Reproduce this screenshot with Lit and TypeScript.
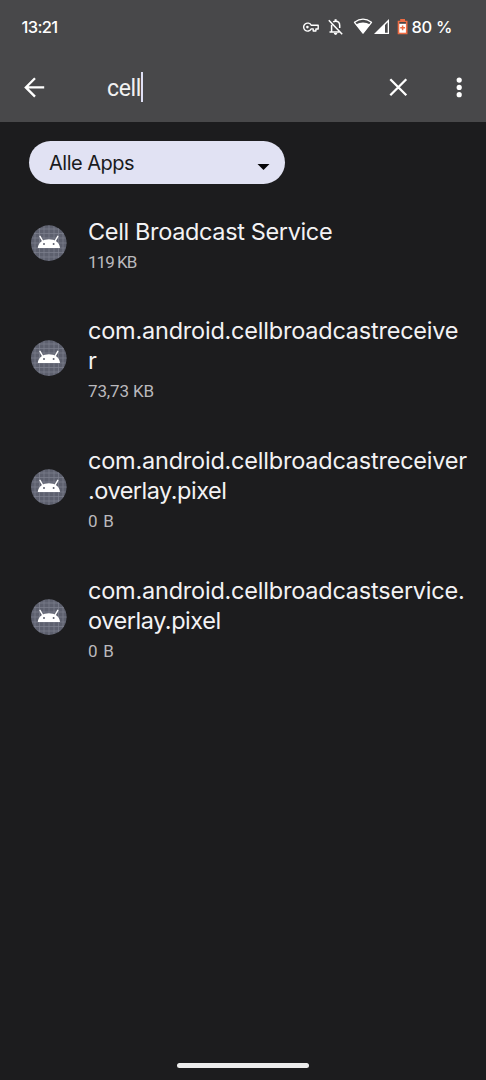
import { LitElement, html, css, svg } from "lit";
import { customElement, property } from "lit/decorators.js";

type Line = { text: string; tracking: number };

const grid = [4, 8.5, 13, 18, 23, 27.5, 32];

@customElement("app-row")
class AppRow extends LitElement {
  @property({ attribute: false }) lines: Line[] = [];
  @property({ attribute: false }) size: Line = { text: "", tracking: 0 };

  static styles = css`
    :host { display: flex; align-items: center; padding: 22.15px 0 22.15px 31px; }
    .icon { width: 36px; height: 36px; flex: none; margin-right: 21px; }
    .text { padding-top: 1.3px; margin-bottom: -1.3px; }
    .title { font: 400 23.5px/29.9px Inter, sans-serif; color: #f3f2f4; white-space: nowrap; }
    .size { font: 400 17px/21px Roboto, sans-serif; color: #bab9bd; padding-top: 5.2px; margin-bottom: -0.7px; white-space: nowrap; }
  `;

  render() {
    return html`
      <svg class="icon" viewBox="0 0 36 36">
        <defs><clipPath id="c"><circle cx="17.8" cy="18.1" r="17.8" /></clipPath></defs>
        <g clip-path="url(#c)">
          <rect width="36" height="36.5" fill="#5d606e" />
          ${grid.map((p) => svg`<path d="M${p} 0V36M0 ${p}H36" stroke="#7e818f" stroke-width=".7" />`)}
        </g>
        <path d="M11.6 15.8L9 11.3M24.2 15.8L26.8 11.3" fill="none" stroke="#fff" stroke-width="1.4" stroke-linecap="round" />
        <path d="M6.8 23C7.2 17.4 12 14.2 17.9 14.2S28.6 17.4 29 23Z" fill="#fff" />
        <circle cx="13" cy="19" r="1" fill="#5d606e" /><circle cx="22.6" cy="19" r="1" fill="#5d606e" />
      </svg>
      <div class="text">
        ${this.lines.map((l) => html`<div class="title" style="letter-spacing:${l.tracking}px">${l.text}</div>`)}
        <div class="size" style="letter-spacing:${this.size.tracking}px">${this.size.text}</div>
      </div>`;
  }
}

const apps: { lines: Line[]; size: Line }[] = [
  { lines: [{ text: "Cell Broadcast Service", tracking: -0.36 }], size: { text: "119 KB", tracking: -0.95 } },
  {
    lines: [{ text: "com.android.cellbroadcastreceive", tracking: -0.22 }, { text: "r", tracking: 0 }],
    size: { text: "73,73 KB", tracking: -0.15 },
  },
  {
    lines: [{ text: "com.android.cellbroadcastreceiver", tracking: -0.22 }, { text: ".overlay.pixel", tracking: -0.5 }],
    size: { text: "0 B", tracking: 0.8 },
  },
  {
    lines: [{ text: "com.android.cellbroadcastservice.", tracking: -0.22 }, { text: "overlay.pixel", tracking: -0.45 }],
    size: { text: "0 B", tracking: 0.8 },
  },
];

@customElement("app-root")
class AppRoot extends LitElement {
  static styles = css`
    :host { display: flex; flex-direction: column; height: 1080px; width: 486px; background: #1c1c1e; overflow: hidden; font-family: Inter, sans-serif; color: #fff; }
    .top { background: #48484a; height: 121.5px; flex: none; }
    .status { display: flex; align-items: center; height: 53px; padding: 0 34px 0 21.5px; font: 500 16.5px/20px Inter, sans-serif; }
    .time { flex: 1; letter-spacing: -0.65px; }
    .icons { display: block; width: 110px; height: 24px; }
    .pct { width: 41px; white-space: nowrap; letter-spacing: -0.3px; padding-left: 0.5px; box-sizing: border-box; }
    .search { display: flex; align-items: center; height: 68px; }
    .back { width: 24px; height: 24px; margin-left: 23px; }
    .query { margin-left: 60px; padding-top: 3px; font: 400 23px/30px Roboto, sans-serif; color: #f1f1f1; letter-spacing: -0.35px; }
    .caret { width: 2px; height: 30px; background: #dfe0f5; }
    .grow { flex: 1; }
    .close { width: 24px; height: 24px; margin-right: 37px; }
    .more { width: 24px; height: 24px; margin-right: 15px; }
    .filter { display: flex; align-items: center; justify-content: space-between; box-sizing: border-box; flex: none; width: 256px; height: 43.5px; margin: 19.3px 0 0 29px; padding: 0 15px 0 20px; border-radius: 22px; background: #e1e2f3; color: #1a1b20; font: 400 20px/24px Inter, sans-serif; letter-spacing: -0.5px; }
    .arrow { width: 13px; height: 8px; margin-top: 8px; }
    .list { flex: 1; padding-top: 9px; }
    .home { width: 132px; height: 5px; border-radius: 3px; background: #ececec; margin: 0 auto 12px 177px; flex: none; }
  `;

  render() {
    return html`
      <div class="top">
        <div class="status">
          <span class="time">13:21</span>
          <svg class="icons" viewBox="301 15 110 24" fill="none" stroke="#fff">
            <path d="M313 25.3H318.2V29H315.9V31H313.2V28.9H311.2A4 4 0 1 1 311.2 25.3Z" stroke-width="1.4" stroke-linejoin="round" />
            <circle cx="307.4" cy="27.1" r="1.3" fill="#fff" stroke="none" />
            <path d="M328.8 20.2L342.2 34.2M333.2 21.9C334 21.3 334.8 21.2 335.6 21.2C338.2 21.2 339.7 23 339.7 25.4V28M331.6 24.8V31.4M329.5 31.9H339.4" stroke-width="1.5" />
            <path d="M335.6 19.2V21.4" stroke-width="2" />
            <path d="M333.8 33.1H337.4A1.8 1.8 0 0 1 333.8 33.1Z" fill="#fff" stroke="none" />
            <path d="M354.5 22.3C359.8 18.4 366.2 18.4 371.5 22.3L363 33Z" stroke-width="1.3" stroke-linejoin="round" />
            <path d="M356 24.5C360 21.8 366 21.8 370 24.5L363 33.5Z" fill="#fff" stroke="none" />
            <path d="M374 34L389 19V34Z" fill="#fff" stroke="none" />
            <path d="M385 25L387.7 22.3V32.8H385Z" fill="#48484a" stroke="none" />
            <path d="M400.2 19H405V20.8H407.5V34.2H397.7V20.8H400.2Z" fill="#ee6b42" stroke="none" />
            <path d="M399.3 23.5H405.9V32.7H399.3Z" fill="#fff" stroke="none" />
            <path d="M399.3 22H405.9V23.7H399.3Z" fill="#48484a" stroke="none" />
            <path d="M402.6 25.4V30.2M400.2 27.8H405" stroke="#ee6b42" stroke-width="1.5" />
          </svg>
          <span class="pct">80 %</span>
        </div>
        <div class="search">
          <svg class="back" viewBox="0 0 24 24" fill="none" stroke="#fff" stroke-width="2.3"><path d="M21.2 12.4H3.5M12 3.2L2.8 12.4L12 21.6" /></svg>
          <span class="query">cell</span><span class="caret"></span>
          <span class="grow"></span>
          <svg class="close" viewBox="0 0 24 24" fill="none" stroke="#fff" stroke-width="2.3"><path d="M4.3 4.3L20.3 20.3M20.3 4.3L4.3 20.3" /></svg>
          <svg class="more" viewBox="0 0 24 24" fill="#fff"><circle cx="12.2" cy="5.1" r="2.6" /><circle cx="12.2" cy="12.4" r="2.6" /><circle cx="12.2" cy="19.7" r="2.6" /></svg>
        </div>
      </div>
      <div class="filter"><span>Alle Apps</span><svg class="arrow" viewBox="0 0 13 8"><path d="M.5 1H12.5L6.5 7Z" fill="#050507" /></svg></div>
      <div class="list">
        ${apps.map((a) => html`<app-row .lines=${a.lines} .size=${a.size}></app-row>`)}
      </div>
      <div class="home"></div>`;
  }
}
